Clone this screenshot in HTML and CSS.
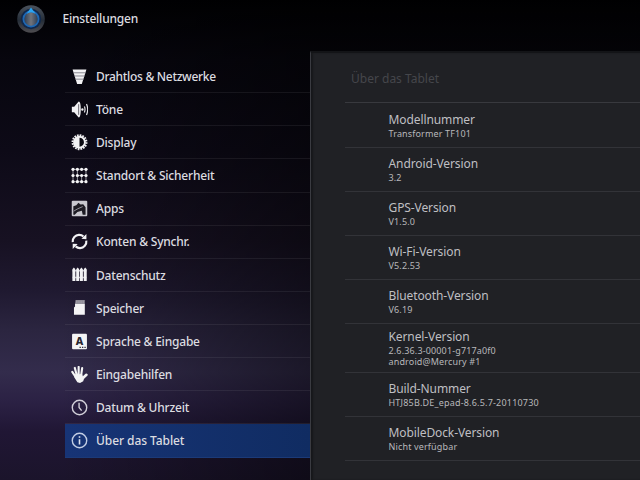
FILE: index.html
```html
<!DOCTYPE html>
<html lang="de">
<head>
    <meta charset="UTF-8">
    <meta name="viewport" content="width=device-width, initial-scale=1.0">
    <title>Einstellungen</title>
    <link rel="stylesheet" href="styles.css">
</head>
<body>

    <header class="top-bar">
        <svg class="app-icon" viewBox="0 0 30 30">
            <defs>
                <linearGradient id="rim" x1="0" y1="0" x2="0" y2="1">
                    <stop offset="0" stop-color="#4b525c"/>
                    <stop offset="0.55" stop-color="#252d38"/>
                    <stop offset="1" stop-color="#4e4c50"/>
                </linearGradient>
                <linearGradient id="knob">
                    <stop offset="0" stop-color="#27374e"/>
                    <stop offset="0.5" stop-color="#70747c"/>
                    <stop offset="1" stop-color="#27374e"/>
                </linearGradient>
            </defs>
            <circle cx="15" cy="15" r="13.8" fill="url(#rim)"/>
            <circle cx="15" cy="15" r="10.2" fill="#10284c"/>
            <circle cx="15" cy="15" r="7.6" fill="url(#knob)" stroke="#1d67b4" stroke-width="1.8"/>
            <path d="M10.6 9.8L15 3.6L19.6 9.8Q15 6.8 10.6 9.8Z" fill="#2ba4f2"/>
        </svg>
        <h1>Einstellungen</h1>
    </header>

    <main class="content">
        <nav class="menu">
            <a class="menu-item">
                <svg class="icon" viewBox="0 0 16 16"><path d="M1.5 1.5H14.5L10.2 15H5.8Z" fill="#f2f2f4"/><path d="M2 4.5H14M3 7.5H13M4 10.5H12" stroke="#77757f" stroke-width=".8"/></svg>
                <span>Drahtlos &amp; Netzwerke</span>
            </a>
            <a class="menu-item">
                <svg class="icon" viewBox="0 0 16 16"><path d="M.8 5.5H3L7 .6Q9.2 0 9.2 8T7 15.4L3 10.5H.8Z" fill="#f2f2f4"/><path d="M7.2 3V13" stroke="#55535c" stroke-width=".8"/><circle cx="10.7" cy="8" r="1.1" fill="#f2f2f4"/><path d="M12.6 5.2Q13.8 8 12.6 10.8M14.6 2.8Q16.8 8 14.6 13.2" fill="none" stroke="#e4e4e8" stroke-width="1.1"/></svg>
                <span>Töne</span>
            </a>
            <a class="menu-item">
                <svg class="icon" viewBox="0 0 16 16"><circle cx="8" cy="7.7" r="6.5" fill="none" stroke="#f2f2f4" stroke-width="2" stroke-dasharray="1.6 .95"/><circle cx="8" cy="7.7" r="5.1" fill="#0c0b12" stroke="#f2f2f4" stroke-width="1.8"/><path d="M8 2.6A5.1 5.1 0 0 0 8 12.8Z" fill="#f2f2f4"/></svg>
                <span>Display</span>
            </a>
            <a class="menu-item">
                <svg class="icon" viewBox="0 0 16 16"><path d="M1.9 2.2H14.1M1.9 2.2V13.8M6 2.2V13.8H14.1V8H6M10 8V13.8M14.1 2.2V8M1.9 13.8H6" fill="none" stroke="#9b99a3" stroke-width=".9"/><g fill="#f5f5f6"><circle cx="1.9" cy="2.2" r="1.5"/><circle cx="6" cy="2.2" r="1.5"/><circle cx="10" cy="2.2" r="1.5"/><circle cx="14.1" cy="2.2" r="1.5"/><circle cx="1.9" cy="8" r="1.5"/><circle cx="6" cy="8" r="1.5"/><circle cx="10" cy="8" r="1.5"/><circle cx="14.1" cy="8" r="1.5"/><circle cx="1.9" cy="13.8" r="1.5"/><circle cx="6" cy="13.8" r="1.5"/><circle cx="10" cy="13.8" r="1.5"/><circle cx="14.1" cy="13.8" r="1.5"/></g></svg>
                <span>Standort &amp; Sicherheit</span>
            </a>
            <a class="menu-item">
                <svg class="icon" viewBox="0 0 16 16"><rect x=".7" y=".7" width="14.6" height="14.6" rx="1" fill="#c9c8cf"/><path d="M2.2 5.8L5 5L7 2.6L9 4.2L11.5 4L13.7 6.8V13.8H11L10.2 10L6 11.4L3.5 13.8H2.2Z" fill="#1d1b23"/><path d="M2.5 10.5L6.5 8.2L11 6.2" stroke="#a3a1aa" stroke-width=".8" fill="none"/></svg>
                <span>Apps</span>
            </a>
            <a class="menu-item">
                <svg class="icon" viewBox="0 0 16 16"><path d="M1.6 8.6C1.2 4.8 4.2 2 7.4 1.8Q10 1.7 11.7 3.4M14.4 7.2C15 11 12 14 8.6 14.2Q6.2 14.3 4.4 12.6" fill="none" stroke="#f2f2f4" stroke-width="2"/><path d="M9.8 5.5L14.5 .9V5.8ZM6.3 10.4L1.6 15V10.2Z" fill="#f2f2f4"/></svg>
                <span>Konten &amp; Synchr.</span>
            </a>
            <a class="menu-item">
                <svg class="icon" viewBox="0 0 16 16"><path d="M1.5 4.5H14.5M1.5 10.8H14.5" stroke="#bab8c2" stroke-width="1.3"/><path d="M1.3 3L2.7 1.4L4.1 3V14H1.3ZM4.9 3L6.3 1.4L7.7 3V14H4.9ZM8.4 3L9.8 1.4L11.2 3V14H8.4ZM12 3L13.4 1.4L14.8 3V14H12Z" fill="#f2f2f4"/></svg>
                <span>Datenschutz</span>
            </a>
            <a class="menu-item">
                <svg class="icon" viewBox="0 0 16 16"><path d="M4.3 1H13V4.5H3.8Z" fill="#8b8893"/><path d="M5.5 1.5V4M7.5 1.5V4M9.5 1.5V4M11.5 1.5V4" stroke="#a9a7b1" stroke-width=".8"/><path d="M3.8 4.5H13V14.8H2.8V8L3.8 7Z" fill="#f4f4f5"/></svg>
                <span>Speicher</span>
            </a>
            <a class="menu-item">
                <svg class="icon" viewBox="0 0 16 16"><rect x="1" y=".8" width="14" height="14.6" rx="1" fill="#f4f4f5"/><text class="key-letter" x="7.9" y="11.2" text-anchor="middle">A</text><path d="M8 13.5H9.3M10.3 13.5H11.6M12.6 13.5H13.9" stroke="#33303c" stroke-width="1"/></svg>
                <span>Sprache &amp; Eingabe</span>
            </a>
            <a class="menu-item">
                <svg class="icon" viewBox="0 0 16 16"><g fill="none" stroke="#f4f4f5" stroke-width="2" stroke-linecap="round"><path d="M1.2 5.5L4.5 10.5M3.6 1.8L5.5 9M7.2 .9V8M10.5 2L9.5 9"/><path d="M14.5 8.3L11 11.5" stroke-width="2.5"/></g><path d="M3.3 8L10.4 7.5L11.2 9.8L12.8 9.8L11.5 14.3L8.5 15.9L6 15.2L3.2 10.8Z" fill="#f4f4f5"/></svg>
                <span>Eingabehilfen</span>
            </a>
            <a class="menu-item">
                <svg class="icon" viewBox="0 0 16 16"><circle cx="8" cy="8" r="6.8" fill="none" stroke="#d2d0d9" stroke-width="1.3"/><path d="M7.6 3.5V8L10 11" fill="none" stroke="#d2d0d9" stroke-width="1.3"/></svg>
                <span>Datum &amp; Uhrzeit</span>
            </a>
            <a class="menu-item active">
                <svg class="icon" viewBox="0 0 16 16"><circle cx="8" cy="8" r="6.8" fill="none" stroke="#c3cee4" stroke-width="1.3"/><path d="M8 6.8V11.8M8 4V5.5" stroke="#dde3f0" stroke-width="1.5"/></svg>
                <span>Über das Tablet</span>
            </a>
        </nav>

        <section class="panel">
            <h2>Über das Tablet</h2>
            <dl class="info-list">
                <div class="info"><dt>Modellnummer</dt><dd>Transformer TF101</dd></div>
                <div class="info"><dt>Android-Version</dt><dd>3.2</dd></div>
                <div class="info"><dt>GPS-Version</dt><dd>V1.5.0</dd></div>
                <div class="info"><dt>Wi-Fi-Version</dt><dd>V5.2.53</dd></div>
                <div class="info"><dt>Bluetooth-Version</dt><dd>V6.19</dd></div>
                <div class="info tall"><dt>Kernel-Version</dt><dd>2.6.36.3-00001-g717a0f0<br>android@Mercury #1</dd></div>
                <div class="info"><dt>Build-Nummer</dt><dd class="build">HTJ85B.DE_epad-8.6.5.7-20110730</dd></div>
                <div class="info"><dt>MobileDock-Version</dt><dd>Nicht verfügbar</dd></div>
            </dl>
        </section>
    </main>

</body>
</html>
```
FILE: styles.css
```css
* { box-sizing: border-box; }

body {
    margin: 0;
    width: 640px;
    height: 480px;
    overflow: hidden;
    display: flex;
    flex-direction: column;
    font-family: "Noto Sans", "Open Sans", sans-serif;
    color: #dcdce0;
    background:
        linear-gradient(to right, transparent 60px, rgba(0, 0, 0, 0.48) 320px),
        linear-gradient(to bottom, #000002 0, #07060e 60px, #0d0a17 150px, #171122 240px, #1f1930 290px, #2b2540 330px, #332c4c 372px, #2b2144 402px, #201634 432px, #1b142b 480px);
}

/* --- Title bar --- */
.top-bar {
    flex: none;
    height: 51px;
    padding: 4px 0 0 16px;
    display: flex;
    align-items: flex-start;
    gap: 16.5px;
}

.app-icon { width: 30px; height: 30px; }

h1 {
    margin: 6px 0 0;
    font-size: 12px;
    line-height: 18px;
    font-weight: 500;
    letter-spacing: -0.2px;
}

/* --- Layout --- */
.content {
    flex: 1;
    min-height: 0;
    display: flex;
}

/* --- Left menu --- */
.menu {
    width: 310px;
    padding: 9px 0 0 65px;
}

.menu-item {
    height: 33.13px;
    padding-left: 6px;
    display: flex;
    align-items: center;
    gap: 9px;
    font-size: 12px;
    font-weight: 500;
    letter-spacing: -0.2px;
    white-space: nowrap;
    border-bottom: 1px solid rgba(255, 255, 255, 0.065);
}

.menu-item span { padding-top: 0.6px; }

.menu-item:first-child span { letter-spacing: -0.3px; }

.menu-item.active {
    letter-spacing: -0.07px;
    background: linear-gradient(to right, #173476, #102c62);
    border-bottom-color: #1b3a78;
}

.icon { flex: none; width: 17px; height: 17px; margin-right: -1px; }

.key-letter {
    font-size: 10px;
    font-weight: 800;
    fill: #292630;
}

/* --- Detail panel --- */
.panel {
    flex: 1;
    padding-left: 34px;
    background: #202125;
    border-top: 2px solid #131417;
    border-left: 1px solid #3a3b41;
    box-shadow: inset 2px 0 2px #17181b;
}

h2 {
    margin: 0;
    height: 50px;
    padding: 17px 0 0 6px;
    font-size: 12px;
    line-height: 18px;
    font-weight: 400;
    color: #45464b;
    border-bottom: 1px solid #38393e;
}

.info-list { margin: 0; }

.info {
    height: 44px;
    padding: 7px 0 0 43.5px;
    border-bottom: 1px solid #323338;
}

.info:first-child { height: 45px; padding-top: 8px; }

.info.tall { height: 49px; padding-top: 4px; }

.info dt {
    font-size: 12px;
    line-height: 17px;
    letter-spacing: -0.1px;
    color: #bfbfc2;
}

.info dd {
    margin: 0;
    font-size: 9px;
    line-height: 11px;
    letter-spacing: 0.15px;
    color: #b8b8bb;
}

.info .build { letter-spacing: 0.2px; }
```
